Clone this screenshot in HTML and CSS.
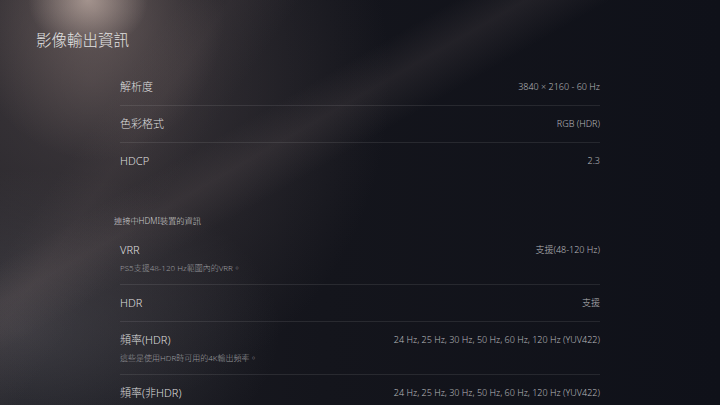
FILE: index.html
```html
<!DOCTYPE html>
<html lang="zh-Hant">
<head>
    <meta charset="UTF-8">
    <title>影像輸出資訊</title>
    <link rel="stylesheet" href="styles.css">
</head>
<body>
    <div class="screen">
        <h1 class="page-title">影像輸出資訊</h1>

        <section class="info-list">
            <div class="row">
                <div class="row-text"><div class="label">解析度</div></div>
                <div class="value">3840 × 2160 - 60 Hz</div>
            </div>
            <div class="row">
                <div class="row-text"><div class="label">色彩格式</div></div>
                <div class="value">RGB (HDR)</div>
            </div>
            <div class="row last">
                <div class="row-text"><div class="label">HDCP</div></div>
                <div class="value">2.3</div>
            </div>
        </section>

        <h2 class="section-title">連接中HDMI裝置的資訊</h2>

        <section class="info-list">
            <div class="row">
                <div class="row-text">
                    <div class="label">VRR</div>
                    <div class="sub">PS5支援48-120 Hz範圍內的VRR。</div>
                </div>
                <div class="value">支援(48-120 Hz)</div>
            </div>
            <div class="row">
                <div class="row-text"><div class="label">HDR</div></div>
                <div class="value">支援</div>
            </div>
            <div class="row">
                <div class="row-text">
                    <div class="label">頻率(HDR)</div>
                    <div class="sub">這些是使用HDR時可用的4K輸出頻率。</div>
                </div>
                <div class="value">24 Hz, 25 Hz, 30 Hz, 50 Hz, 60 Hz, 120 Hz (YUV422)</div>
            </div>
            <div class="row">
                <div class="row-text"><div class="label">頻率(非HDR)</div></div>
                <div class="value">24 Hz, 25 Hz, 30 Hz, 50 Hz, 60 Hz, 120 Hz (YUV422)</div>
            </div>
        </section>
    </div>
</body>
</html>
```

FILE: styles.css
```css
html, body {
    margin: 0;
    padding: 0;
}

body {
    width: 720px;
    height: 405px;
    overflow: hidden;
    font-family: "Noto Sans", "Noto Sans CJK TC", sans-serif;
    font-weight: 300;
    background-color: #11131b;
    background-image:
        radial-gradient(ellipse 60px 50px at 88px 0px, rgba(210, 190, 180, 0.6), rgba(210, 190, 180, 0) 100%),
        radial-gradient(ellipse 130px 150px at 95px 10px, rgba(150, 130, 125, 0.45), rgba(150, 130, 125, 0) 100%),
        linear-gradient(150deg, rgba(0, 0, 0, 0) 32%, rgba(120, 105, 105, 0.16) 37%, rgba(0, 0, 0, 0) 43%),
        linear-gradient(125deg, rgba(0, 0, 0, 0) 18%, rgba(110, 95, 95, 0.12) 23%, rgba(0, 0, 0, 0) 30%),
        radial-gradient(ellipse 300px 330px at 90px 80px, rgba(90, 80, 82, 0.55), rgba(90, 80, 82, 0) 100%),
        radial-gradient(ellipse 260px 160px at 20px 330px, rgba(85, 85, 92, 0.5), rgba(85, 85, 92, 0) 100%),
        linear-gradient(90deg, #1c1c22 0%, #14151c 45%, #0f1119 100%);
    color: #dcdcdc;
}

.screen {
    padding-top: 28px;
}

.page-title {
    margin: 0 0 17px 36px;
    font-size: 15.5px;
    line-height: 24px;
    font-weight: 300;
    color: #e2e2e2;
}

.info-list {
    margin-left: 120px;
    width: 480px;
}

.row {
    display: flex;
    justify-content: space-between;
    align-items: flex-start;
    padding: 10px 0;
    border-bottom: 1px solid rgba(255, 255, 255, 0.09);
}

.row.last {
    border-bottom: none;
}

.label {
    font-size: 11px;
    line-height: 16px;
    color: #dedede;
}

.sub {
    margin-top: 3px;
    margin-bottom: -1px;
    font-size: 8px;
    line-height: 14px;
    color: #9a9a9e;
}

.value {
    font-size: 9px;
    line-height: 16px;
    color: #b8b8bc;
    white-space: nowrap;
}

.section-title {
    margin: 36px 0 5px 114px;
    font-size: 8.2px;
    line-height: 12px;
    font-weight: 300;
    color: #cfcfcf;
}
```
